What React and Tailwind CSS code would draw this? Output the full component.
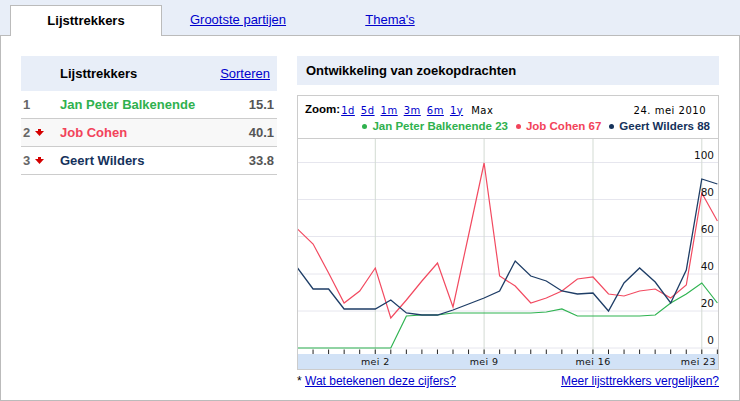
import React from "react";

const X0 = 297.5;
const DX = 15.55;
const red = [229, 244, 273, 303, 291, 268, 318, 300, 281, 263, 307, 235, 163, 276, 286, 303, 298, 291, 279, 277, 294, 296, 291, 289, 298, 285, 193, 221];
const blue = [268, 289, 289, 309, 309, 309, 300, 313, 315, 315, 310, 304, 298, 291, 261, 276, 281, 291, 294, 293, 311, 283, 268, 282, 303, 270, 179, 184];
const green = [348, 348, 348, 348, 348, 348, 348, 316, 315, 315, 313, 313, 313, 313, 313, 313, 312, 309, 316, 316, 316, 316, 316, 315, 303, 294, 283, 303];

const pts = (arr) => arr.map((y, i) => `${(X0 + DX * i).toFixed(1)},${y}`).join(" ");

function DownArrow() {
  return (
    <svg width="9" height="7" viewBox="0 0 9 7" className="inline-block">
      <rect x="3" y="0" width="3" height="2" fill="#d40000" />
      <polygon points="0,2 9,2 4.5,7" fill="#d40000" />
    </svg>
  );
}

function Chart() {
  const gridY = [162.5, 199.5, 236.5, 274, 311, 348];
  const labels = ["100", "80", "60", "40", "20", "0"];
  const weekX = [375.3, 484.1, 593, 701.8];
  const weekLbl = ["mei 2", "mei 9", "mei 16", "mei 23"];
  const ticks = Array.from({ length: 28 }, (_, i) => X0 + DX * i);
  return (
    <svg width="420" height="230" viewBox="298 139 420 230" className="block">
      {gridY.map((y) => (
        <line key={y} x1="298" x2="718" y1={y} y2={y} stroke="#e6e6ee" strokeWidth="1" />
      ))}
      {weekX.map((x) => (
        <line key={x} x1={x} x2={x} y1="139" y2="354" stroke="#d3dbd3" strokeWidth="1" />
      ))}
      <polyline points={pts(green)} fill="none" stroke="#2fb351" strokeWidth="1.2" />
      <polyline points={pts(red)} fill="none" stroke="#f24a60" strokeWidth="1.2" />
      <polyline points={pts(blue)} fill="none" stroke="#1e3d66" strokeWidth="1.3" />
      {labels.map((l, i) => (
        <text
          key={l}
          x="714"
          y={gridY[i] - 4}
          textAnchor="end"
          fontFamily="'DejaVu Sans', sans-serif"
          fontSize="10.5"
          fill="#111"
        >
          {l}
        </text>
      ))}
      {ticks.map((x) => (
        <line key={x} x1={x} x2={x} y1="349.5" y2="354" stroke="#222" strokeWidth="1" />
      ))}
      <rect x="298" y="354" width="420" height="15" fill="#d2e2f6" />
      {weekLbl.map((l, i) => (
        <text
          key={l}
          x={i === 3 ? 716 : weekX[i]}
          y="365"
          textAnchor={i === 3 ? "end" : "middle"}
          fontFamily="'DejaVu Sans', sans-serif"
          fontSize="9.5"
          letterSpacing="0.4"
          fill="#111"
        >
          {l}
        </text>
      ))}
    </svg>
  );
}

export default function App() {
  const zooms = ["1d", "5d", "1m", "3m", "6m", "1y"];
  return (
    <div className="w-[740px] h-[401px] bg-[#e8eef8] flex flex-col font-['Liberation_Sans',Arial,sans-serif] text-[13px] text-black">
      <div className="h-[36px] shrink-0 flex items-end pl-[10px] border-b border-[#bbbbbb]">
        <div className="w-[152px] h-[31px] -mb-px bg-white border border-b-0 border-[#bbbbbb] flex items-center justify-center font-bold text-[13px]">
          Lijsttrekkers
        </div>
        <div className="w-[152px] h-[31px] flex items-center justify-center">
          <a href="#" className="text-[#0000cc] underline">Grootste partijen</a>
        </div>
        <div className="w-[152px] h-[31px] flex items-center justify-center">
          <a href="#" className="text-[#0000cc] underline">Thema's</a>
        </div>
      </div>
      <div className="flex-1 bg-white border border-t-0 border-[#bbbbbb] flex gap-[20px] pt-[20px] px-[20px]">
        <div className="w-[256px] shrink-0">
          <div className="h-[35px] bg-[#e8eef8] flex items-center justify-between pl-[39px] pr-[7px]">
            <span className="font-bold">Lijsttrekkers</span>
            <a href="#" className="text-[#0000cc] underline">Sorteren</a>
          </div>
          {[
            { n: "1", name: "Jan Peter Balkenende", v: "15.1", c: "text-[#2fb14e]", bg: "bg-white", arrow: false },
            { n: "2", name: "Job Cohen", v: "40.1", c: "text-[#f2435a]", bg: "bg-[#f8f8f8]", arrow: true },
            { n: "3", name: "Geert Wilders", v: "33.8", c: "text-[#15325b]", bg: "bg-white", arrow: true },
          ].map((r) => (
            <div key={r.n} className={`h-[28px] border-b border-[#cccccc] flex items-center font-bold ${r.bg}`}>
              <span className="w-[13px] pl-[2px] text-[#666666]">{r.n}</span>
              <span className="w-[26px] pl-[1px] flex items-center">{r.arrow && <DownArrow />}</span>
              <span className={`flex-1 ${r.c}`}>{r.name}</span>
              <span className="pr-[3px] text-[#555555]">{r.v}</span>
            </div>
          ))}
        </div>
        <div className="w-[422px] shrink-0 flex flex-col">
          <div className="h-[29px] bg-[#e8eef8] flex items-center pl-[9px] font-bold">
            Ontwikkeling van zoekopdrachten
          </div>
          <div className="mt-[10px] border border-[#cccccc]">
            <div className="h-[43px] border-b border-[#cccccc] flex flex-col px-[7px] pt-[6px]">
              <div className="flex items-center h-[16px] text-[10px] font-['DejaVu_Sans',sans-serif] tracking-[0.5px]">
                <span className="font-['Liberation_Sans',Arial,sans-serif] font-bold text-[11.5px] tracking-normal">Zoom:</span>
                <span className="flex gap-[6px] ml-[1px]">
                  {zooms.map((z) => (
                    <a key={z} href="#" className="text-[#0000cc] underline">{z}</a>
                  ))}
                  <span className="ml-[2px]">Max</span>
                </span>
                <span className="ml-auto mr-[5px]">24. mei 2010</span>
              </div>
              <div className="flex items-center justify-end h-[17px] font-bold text-[11.5px] gap-[5px] pr-[1px]">
                <span className="w-[5px] h-[5px] rounded-full bg-[#2fb14e]" />
                <span className="text-[#2fb14e]">Jan Peter Balkenende 23</span>
                <span className="w-[5px] h-[5px] rounded-full bg-[#f2435a] ml-[3px]" />
                <span className="text-[#f2435a]">Job Cohen 67</span>
                <span className="w-[5px] h-[5px] rounded-full bg-[#15325b] ml-[3px]" />
                <span className="text-[#15325b]">Geert Wilders 88</span>
              </div>
            </div>
            <Chart />
          </div>
          <div className="mt-[4px] flex justify-between text-[12px] leading-[14px]">
            <span>
              * <a href="#" className="text-[#0000cc] underline">Wat betekenen deze cijfers?</a>
            </span>
            <a href="#" className="text-[#0000cc] underline">Meer lijsttrekkers vergelijken?</a>
          </div>
        </div>
      </div>
    </div>
  );
}
